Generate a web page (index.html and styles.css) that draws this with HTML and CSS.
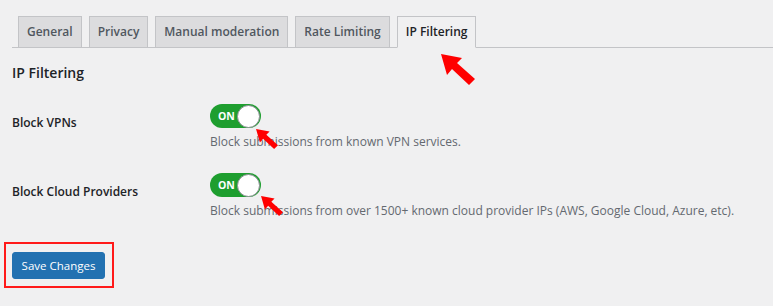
FILE: index.html
```html
<!DOCTYPE html>
<html lang="en">
<head>
<meta charset="utf-8">
<title>IP Filtering</title>
<link rel="stylesheet" href="styles.css">
</head>
<body>
<div class="wrap">
  <nav class="tabs">
    <a class="tab">General</a>
    <a class="tab">Privacy</a>
    <a class="tab">Manual moderation</a>
    <a class="tab">Rate Limiting</a>
    <a class="tab active">IP Filtering</a>
  </nav>
  <h2 class="title">IP Filtering</h2>
  <div class="form">
    <div class="row">
      <div class="label">Block VPNs</div>
      <div class="field">
        <span class="toggle"><span class="on">ON</span><span class="knob"></span></span>
        <p class="desc">Block submissions from known VPN services.</p>
      </div>
    </div>
    <div class="row">
      <div class="label">Block Cloud Providers</div>
      <div class="field">
        <span class="toggle"><span class="on">ON</span><span class="knob"></span></span>
        <p class="desc">Block submissions from over 1500+ known cloud provider IPs (AWS, Google Cloud, Azure, etc).</p>
      </div>
    </div>
  </div>
  <div class="highlight"><button class="save">Save Changes</button></div>
</div>
<svg class="arrow arrow-tab" viewBox="0 0 34 31"><polygon points="0,0 6,21 11,15 28,31 34,25 16,9 21,4"/></svg>
<svg class="arrow arrow-a" viewBox="0 0 34 31"><polygon points="0,0 6,21 11,15 28,31 34,25 16,9 21,4"/></svg>
<svg class="arrow arrow-b" viewBox="0 0 34 31"><polygon points="0,0 6,21 11,15 28,31 34,25 16,9 21,4"/></svg>
</body>
</html>
```
FILE: styles.css
```css
html, body {
  margin: 0;
  padding: 0;
  background: #f0f0f1;
}
body {
  font-family: "Open Sans", "Noto Sans", sans-serif;
  font-size: 12px;
  color: #1d2327;
  width: 773px;
  height: 306px;
  overflow: hidden;
  position: relative;
}
.wrap {
  padding-left: 12px;
}
.tabs {
  display: flex;
  gap: 7px;
  margin-top: 16px;
  padding-left: 6px;
  border-bottom: 1px solid #c3c4c7;
  height: 31px;
  align-items: flex-end;
}
.tab {
  box-sizing: border-box;
  height: 32px;
  margin-bottom: -1px;
  padding: 0 8px;
  line-height: 30px;
  font-size: 12px;
  font-weight: 600;
  color: #50575e;
  background: #dcdcde;
  border: 1px solid #c3c4c7;
}
.tab.active {
  background: #f0f0f1;
  color: #1d2327;
  border-bottom-color: #f0f0f1;
}
.title {
  margin: 16px 0 0;
  font-size: 14px;
  font-weight: 600;
  line-height: 18px;
  color: #1d2327;
}
.form {
  margin-top: 22px;
}
.row {
  display: grid;
  grid-template-columns: 198px 1fr;
  height: 69px;
}
.label {
  padding-top: 11px;
  font-weight: 600;
  font-size: 12px;
  line-height: 16px;
}
.toggle {
  box-sizing: border-box;
  display: flex;
  align-items: center;
  justify-content: space-between;
  width: 51px;
  height: 24px;
  border-radius: 12px;
  background: #1e9e2f;
  padding: 0 1px 0 8px;
}
.on {
  color: #fff;
  font-weight: 700;
  font-size: 10.5px;
  line-height: 12px;
}
.knob {
  box-sizing: border-box;
  width: 23px;
  height: 23px;
  border-radius: 50%;
  background: #fff;
  border: 1px solid #8c8f94;
}
.desc {
  margin: 6px 0 0;
  color: #646970;
  font-size: 12px;
  line-height: 16px;
}
.highlight {
  display: inline-block;
  margin: 0 0 0 -8px;
  padding: 8px 7px 7px 6px;
  border: 2px solid #ff1a1a;
}
.save {
  display: block;
  box-sizing: border-box;
  width: 93px;
  height: 27px;
  padding: 0;
  border: 1px solid #2271b1;
  border-radius: 3px;
  background: #2271b1;
  color: #fff;
  font-family: "Open Sans", "Noto Sans", sans-serif;
  font-size: 11.5px;
  line-height: 25px;
}
.arrow {
  position: absolute;
  fill: #ff0000;
}
.arrow-tab {
  left: 441px;
  top: 54px;
  width: 34px;
  height: 31px;
}
.arrow-a {
  left: 256px;
  top: 129px;
  width: 22px;
  height: 20px;
}
.arrow-b {
  left: 261px;
  top: 196px;
  width: 22px;
  height: 20px;
}
```
